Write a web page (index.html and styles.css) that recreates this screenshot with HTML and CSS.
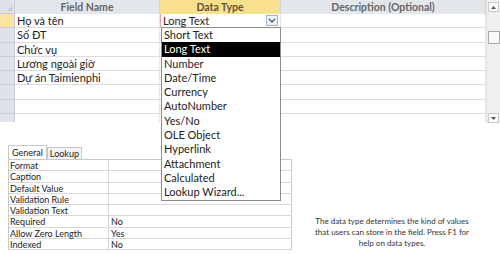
FILE: index.html
```html
<!DOCTYPE html>
<html>
<head>
<meta charset="utf-8">
<link rel="stylesheet" href="styles.css">
</head>
<body>
<div class="page">
  <div class="top">
    <div class="grid">
      <div class="hdr sel corner"><span class="tri"></span></div>
      <div class="hdr">Field Name</div>
      <div class="hdr active-col">Data Type</div>
      <div class="hdr">Description (Optional)</div>

      <div class="sel cur"></div>
      <div class="cell">Họ và tên</div>
      <div class="cell dtcell"><div class="combo"><span>Long Text</span><span class="btn"><svg width="8" height="5" viewBox="0 0 8 5"><path d="M1 1 L4 4 L7 1" fill="none" stroke="#3a4a60" stroke-width="1.2"/></svg></span></div></div>
      <div class="cell"></div>

      <div class="sel"></div><div class="cell">Số ĐT</div><div class="cell"></div><div class="cell"></div>
      <div class="sel"></div><div class="cell">Chức vụ</div><div class="cell"></div><div class="cell"></div>
      <div class="sel"></div><div class="cell">Lương ngoài giờ</div><div class="cell"></div><div class="cell"></div>
      <div class="sel"></div><div class="cell">Dự án Taimienphi</div><div class="cell"></div><div class="cell"></div>
      <div class="sel"></div><div class="cell"></div><div class="cell"></div><div class="cell"></div>
      <div class="sel"></div><div class="cell"></div><div class="cell"></div><div class="cell"></div>
      <div class="sel last"></div><div class="cell last"></div><div class="cell last"></div><div class="cell last"></div>
    </div>
    <div class="vscroll">
      <div class="sbtn"><svg width="5" height="3" viewBox="0 0 5 3"><path d="M0 3 L2.5 0 L5 3 Z" fill="#555"/></svg></div>
      <div class="thumb"></div>
      <div class="track"></div>
      <div class="sbtn"><svg width="5" height="3" viewBox="0 0 5 3"><path d="M0 0 L2.5 3 L5 0 Z" fill="#555"/></svg></div>
    </div>
    <ul class="dropdown">
      <li>Short Text</li>
      <li class="hl">Long Text</li>
      <li>Number</li>
      <li>Date/Time</li>
      <li>Currency</li>
      <li>AutoNumber</li>
      <li>Yes/No</li>
      <li>OLE Object</li>
      <li>Hyperlink</li>
      <li>Attachment</li>
      <li>Calculated</li>
      <li>Lookup Wizard...</li>
    </ul>
  </div>

  <div class="bottom">
    <div class="props">
      <div class="tabs">
        <div class="tab on">General</div>
        <div class="tab">Lookup</div>
      </div>
      <div class="pgrid">
        <div class="pl">Format</div><div class="pv"></div>
        <div class="pl">Caption</div><div class="pv"></div>
        <div class="pl">Default Value</div><div class="pv"></div>
        <div class="pl">Validation Rule</div><div class="pv"></div>
        <div class="pl">Validation Text</div><div class="pv"></div>
        <div class="pl">Required</div><div class="pv">No</div>
        <div class="pl">Allow Zero Length</div><div class="pv">Yes</div>
        <div class="pl">Indexed</div><div class="pv">No</div>
      </div>
    </div>
    <div class="help">The data type determines the kind of values<br>that users can store in the field. Press F1 for<br>help on data types.</div>
  </div>
</div>
</body>
</html>
```
FILE: styles.css
```css
html, body { margin: 0; padding: 0; background: #fff; }
body { width: 500px; height: 254px; overflow: hidden; font-family: "Lato", "Open Sans", sans-serif; color: #222; }
.page { display: flex; flex-direction: column; }
.top { position: relative; display: flex; height: 123px; }
.grid {
  display: grid;
  grid-template-columns: 15px 145px 121px 205px;
  grid-template-rows: 14px repeat(6, 14.3px) 14.3px 8px;
  width: 486px;
}
.hdr {
  background: #e3e6eb;
  color: #666;
  font-weight: 700;
  font-size: 10.5px;
  text-align: center;
  line-height: 14px;
  border-right: 1px solid #d0d4da;
  box-sizing: border-box;
}
.hdr.active-col { background: #f9e08e; color: #5e5535; }
.corner { position: relative; background: #dde1e7; }
.tri { position: absolute; right: 2px; bottom: 2px; width: 0; height: 0; border-left: 5px solid transparent; border-bottom: 5px solid #c4c9d2; }
.sel { background: #dfe3e9; border-bottom: 1px solid #c9ced6; box-sizing: border-box; border-right: 1px solid #c9ced6; }
.sel.cur { background: #fbe3a2; }
.cell {
  border-bottom: 1px solid #dcdcdc;
  border-right: 1px solid #e6e6e6;
  box-sizing: border-box;
  font-size: 11px;
  line-height: 13px;
  padding-left: 2px;
  white-space: nowrap;
}
.cell.last, .sel.last { border-bottom: none; }
.dtcell { padding: 0; border-left: 1px solid #e6a0a8; }
.combo { display: flex; justify-content: space-between; align-items: center; height: 13px; padding-left: 2px; }
.btn { width: 12px; height: 11px; margin-right: 2px; border: 1px solid #9fb4cc; background: #eef3f9; box-sizing: border-box; display: flex; align-items: center; justify-content: center; }
.vscroll { width: 14px; background: #f0f0f0; display: flex; flex-direction: column; align-items: center; padding-top: 2px; box-sizing: border-box; border-left: 1px solid #e3e3e3; }
.sbtn { width: 11px; height: 10px; border: 1px solid #c8c8c8; background: #fbfbfb; box-sizing: border-box; display: flex; align-items: center; justify-content: center; flex: none; }
.thumb { width: 12px; height: 13px; border: 1px solid #a8a8a8; background: #fafafa; box-sizing: border-box; margin-top: 19px; flex: none; }
.track { flex: 1; }
.dropdown {
  position: absolute; left: 161px; top: 27px;
  width: 120px; margin: 0; padding: 0; list-style: none;
  background: #fff; border: 1px solid #8c8c8c; box-sizing: border-box;
}
.dropdown li { height: 14.3px; line-height: 14px; font-size: 11px; padding-left: 2px; white-space: nowrap; }
.dropdown li.hl { background: #000; color: #fff; }
.bottom { display: flex; padding-top: 22px; }
.props { width: 292px; padding-left: 8px; box-sizing: border-box; }
.tabs { display: flex; align-items: flex-end; height: 14px; }
.tab { font-size: 9px; line-height: 11px; padding: 0 2px; border: 1px solid #c8c8c8; border-bottom: none; background: #f3f3f3; color: #222; }
.tab.on { background: #fff; line-height: 13px; padding: 0 3px; }
.pgrid {
  display: grid; grid-template-columns: 100px 183px;
  border: 1px solid #c8c8c8; border-bottom: none;
}
.pl, .pv { height: 11.3px; line-height: 11px; font-size: 9px; border-bottom: 1px solid #d8d8d8; box-sizing: border-box; padding-left: 1px; white-space: nowrap; }
.pl { border-right: 1px solid #d8d8d8; }
.pv { padding-left: 2px; }
.help { flex: 1; font-size: 8px; line-height: 11px; text-align: center; color: #333; padding: 71px 8px 0 0; white-space: nowrap; }
```
